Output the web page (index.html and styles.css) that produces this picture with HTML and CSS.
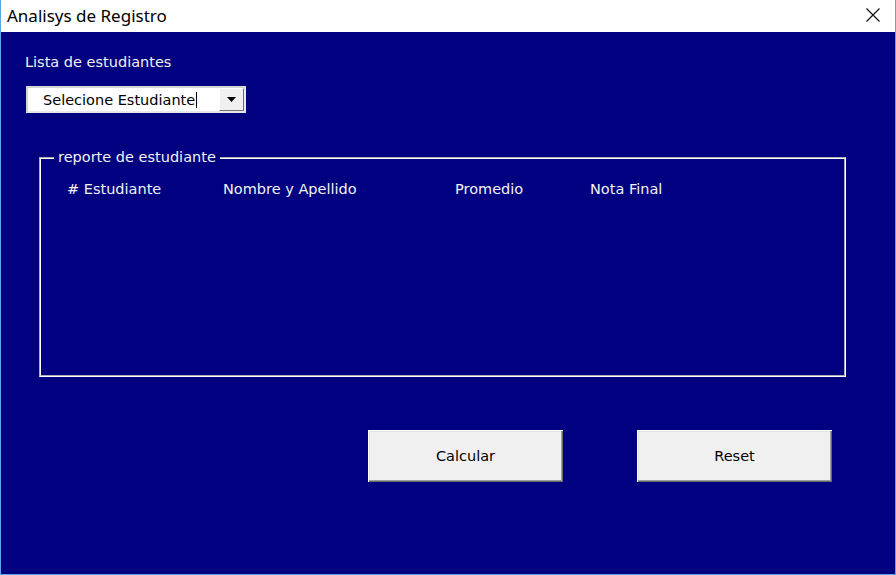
FILE: index.html
```html
<!DOCTYPE html>
<html lang="es">
<head>
<meta charset="utf-8">
<title>Analisys de Registro</title>
<link rel="stylesheet" href="styles.css">
</head>
<body>
<div class="window">
  <div class="titlebar">
    <span class="title">Analisys de Registro</span>
    <span class="close">
      <svg width="16" height="16" viewBox="0 0 16 16"><path d="M1.5 1.5 L14.5 14.5 M14.5 1.5 L1.5 14.5" stroke="#111" stroke-width="1.2" fill="none"/></svg>
    </span>
  </div>
  <div class="client">
    <div class="label">Lista de estudiantes</div>
    <div class="combo">
      <div class="combo-text">Selecione Estudiante<span class="caret"></span></div>
      <div class="combo-btn">
        <svg width="9" height="5" viewBox="0 0 9 5"><path d="M0 0 H9 L4.5 5 Z" fill="#000"/></svg>
      </div>
    </div>
    <fieldset class="frame">
      <legend class="legend">reporte de estudiante</legend>
      <div class="headers">
        <span># Estudiante</span>
        <span>Nombre y Apellido</span>
        <span>Promedio</span>
        <span>Nota Final</span>
      </div>
    </fieldset>
    <div class="actions">
      <button class="btn">Calcular</button>
      <button class="btn">Reset</button>
    </div>
  </div>
</div>
</body>
</html>
```

FILE: styles.css
```css
html, body {
  margin: 0;
  padding: 0;
  background: #ffffff;
}
.window {
  width: 896px;
  height: 575px;
  box-sizing: border-box;
  border: 1px solid #5aa6e4;
  border-top: none;
  display: flex;
  flex-direction: column;
}
.titlebar {
  height: 32px;
  background: #ffffff;
  display: flex;
  align-items: center;
  justify-content: space-between;
  padding: 0 14px 0 6px;
  flex: none;
}
.title {
  font-family: "Noto Sans", sans-serif;
  font-size: 17px;
  color: #000;
  position: relative;
  top: -1px;
}
.close {
  display: flex;
  width: 16px;
  height: 16px;
  position: relative;
  top: -1px;
}
.client {
  flex: 1;
  background: #000080;
  padding: 22px 0 0 0;
  font-family: "DejaVu Sans", sans-serif;
  font-size: 14.5px;
  color: #f2f2f2;
}
.label {
  margin-left: 24px;
  line-height: 17px;
}
.combo {
  margin: 15px 0 0 25px;
  width: 220px;
  height: 27px;
  box-sizing: border-box;
  background: #ffffff;
  border: 2px solid #d4d4d4;
  border-right-color: #e8e8e8;
  border-bottom-color: #e8e8e8;
  display: flex;
  align-items: stretch;
}
.combo-text {
  flex: 1;
  color: #000;
  padding-left: 15px;
  display: flex;
  align-items: center;
  white-space: nowrap;
}
.caret {
  display: inline-block;
  width: 1px;
  height: 16px;
  background: #000;
  margin-left: 1px;
}
.combo-btn {
  width: 25px;
  flex: none;
  background: #f0f0f0;
  border-left: 1px solid #ffffff;
  border-top: 1px solid #ffffff;
  border-right: 1px solid #707070;
  border-bottom: 1px solid #707070;
  box-sizing: border-box;
  display: flex;
  align-items: center;
  justify-content: center;
}
.frame {
  margin: 36px 0 0 38px;
  width: 807px;
  height: 228px;
  box-sizing: border-box;
  border: 2px groove #ffffff;
  padding: 15px 0 0 26px;
  min-width: 0;
}
.legend {
  padding: 0 4px;
  margin-left: -13px;
  line-height: 17px;
  color: #f2f2f2;
}
.headers {
  display: grid;
  grid-template-columns: 156px 232px 135px auto;
  line-height: 17px;
}
.actions {
  display: flex;
  gap: 74px;
  margin: 53px 0 0 367px;
}
.btn {
  width: 195px;
  height: 52px;
  box-sizing: border-box;
  background: #f0f0f0;
  border: none;
  box-shadow: inset 1px 1px 0 #ffffff, inset -1px -1px 0 #696969, inset -2px -2px 0 #a0a0a0, inset 2px 2px 0 #e3e3e3;
  font-family: "DejaVu Sans", sans-serif;
  font-size: 14.5px;
  color: #000;
  padding: 0;
  margin: 0;
}
```
